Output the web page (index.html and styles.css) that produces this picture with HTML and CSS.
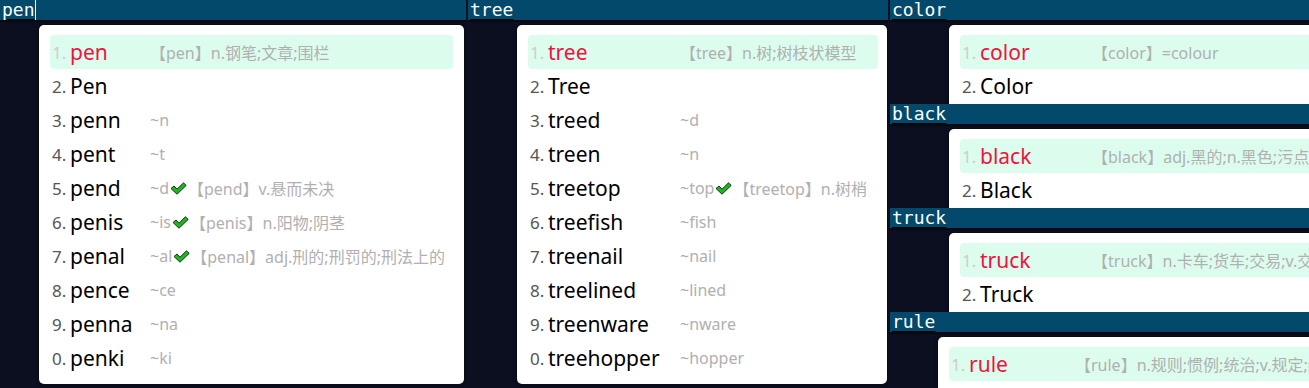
FILE: index.html
```html
<!DOCTYPE html>
<html lang="zh-CN">
<head>
  <meta charset="UTF-8">
  <title>候选词</title>
  <link rel="stylesheet" href="styles.css">
</head>
<body>
  <!-- 第一列 -->
  <div class="column col-pen">
    <div class="bar"><span class="code">pen</span><span class="caret"></span></div>
    <div class="popup pop-pen">
      <div class="row active"><span class="num">1.</span><span class="word">pen</span><span class="note">【pen】n.钢笔;文章;围栏</span></div>
      <div class="row"><span class="num">2.</span><span class="word">Pen</span></div>
      <div class="row"><span class="num">3.</span><span class="word">penn</span><span class="note">~n</span></div>
      <div class="row"><span class="num">4.</span><span class="word">pent</span><span class="note">~t</span></div>
      <div class="row"><span class="num">5.</span><span class="word">pend</span><span class="note">~d<svg class="tick" viewBox="0 0 17 13"><path d="M1 6.5 L4 4 L7 7.2 L13.5 0.8 L16.2 3.4 L7 12.2 Z"/></svg>【pend】v.悬而未决</span></div>
      <div class="row"><span class="num">6.</span><span class="word">penis</span><span class="note">~is<svg class="tick" viewBox="0 0 17 13"><path d="M1 6.5 L4 4 L7 7.2 L13.5 0.8 L16.2 3.4 L7 12.2 Z"/></svg>【penis】n.阳物;阴茎</span></div>
      <div class="row"><span class="num">7.</span><span class="word">penal</span><span class="note">~al<svg class="tick" viewBox="0 0 17 13"><path d="M1 6.5 L4 4 L7 7.2 L13.5 0.8 L16.2 3.4 L7 12.2 Z"/></svg>【penal】adj.刑的;刑罚的;刑法上的</span></div>
      <div class="row"><span class="num">8.</span><span class="word">pence</span><span class="note">~ce</span></div>
      <div class="row"><span class="num">9.</span><span class="word">penna</span><span class="note">~na</span></div>
      <div class="row"><span class="num">0.</span><span class="word">penki</span><span class="note">~ki</span></div>
    </div>
  </div>

  <!-- 第二列 -->
  <div class="column col-tree">
    <div class="bar"><span class="code">tree</span></div>
    <div class="popup pop-tree">
      <div class="row active"><span class="num">1.</span><span class="word">tree</span><span class="note">【tree】n.树;树枝状模型</span></div>
      <div class="row"><span class="num">2.</span><span class="word">Tree</span></div>
      <div class="row"><span class="num">3.</span><span class="word">treed</span><span class="note">~d</span></div>
      <div class="row"><span class="num">4.</span><span class="word">treen</span><span class="note">~n</span></div>
      <div class="row"><span class="num">5.</span><span class="word">treetop</span><span class="note">~top<svg class="tick" viewBox="0 0 17 13"><path d="M1 6.5 L4 4 L7 7.2 L13.5 0.8 L16.2 3.4 L7 12.2 Z"/></svg>【treetop】n.树梢</span></div>
      <div class="row"><span class="num">6.</span><span class="word">treefish</span><span class="note">~fish</span></div>
      <div class="row"><span class="num">7.</span><span class="word">treenail</span><span class="note">~nail</span></div>
      <div class="row"><span class="num">8.</span><span class="word">treelined</span><span class="note">~lined</span></div>
      <div class="row"><span class="num">9.</span><span class="word">treenware</span><span class="note">~nware</span></div>
      <div class="row"><span class="num">0.</span><span class="word">treehopper</span><span class="note">~hopper</span></div>
    </div>
  </div>

  <!-- 第三列：四个截断的小窗 -->
  <div class="column col-small">
    <div class="panel">
      <div class="bar"><span class="code">color</span></div>
      <div class="popup pop-mid">
        <div class="row active"><span class="num">1.</span><span class="word">color</span><span class="note">【color】=colour</span></div>
        <div class="row"><span class="num">2.</span><span class="word">Color</span></div>
      </div>
    </div>
    <div class="panel">
      <div class="bar"><span class="code">black</span></div>
      <div class="popup pop-mid">
        <div class="row active"><span class="num">1.</span><span class="word">black</span><span class="note">【black】adj.黑的;n.黑色;污点;v.使变黑</span></div>
        <div class="row"><span class="num">2.</span><span class="word">Black</span></div>
      </div>
    </div>
    <div class="panel">
      <div class="bar"><span class="code">truck</span></div>
      <div class="popup pop-mid">
        <div class="row active"><span class="num">1.</span><span class="word">truck</span><span class="note">【truck】n.卡车;货车;交易;v.交换</span></div>
        <div class="row"><span class="num">2.</span><span class="word">Truck</span></div>
      </div>
    </div>
    <div class="panel">
      <div class="bar"><span class="code">rule</span></div>
      <div class="popup pop-rule">
        <div class="row active"><span class="num">1.</span><span class="word">rule</span><span class="note">【rule】n.规则;惯例;统治;v.规定;统治</span></div>
        <div class="row"><span class="num">2.</span><span class="word">Rule</span></div>
      </div>
    </div>
  </div>
</body>
</html>
```

FILE: styles.css
```css
body {
  margin: 0;
  height: 388px;
  overflow: hidden;
  display: flex;
  background-color: #0c0f1f;
  font-family: "Noto Sans", "Noto Sans CJK SC", sans-serif;
}

.column {
  flex: none;
  overflow: hidden;
}

.col-pen {
  width: 466px;
}

.col-tree {
  width: 420px;
  margin-left: 2px;
}

.col-small {
  width: 419px;
  margin-left: 2px;
}

/* 输入栏 */
.bar {
  height: 20px;
  border-bottom: 2px solid #060812;
  background-color: #02496b;
  display: flex;
  align-items: stretch;
}

.code {
  padding-left: 2px;
  font-family: "DejaVu Sans Mono", monospace;
  font-size: 18px;
  line-height: 20px;
  color: #ffffff;
  text-decoration: underline;
  text-decoration-color: #000000;
  text-underline-offset: 3px;
  white-space: nowrap;
}

.caret {
  width: 1px;
  background-color: #ffffff;
}

/* 候选窗 */
.popup {
  margin-top: 3px;
  padding: 10px 11px 9px 11px;
  background-color: #ffffff;
  border-radius: 5px;
  box-shadow: 0 0 4px rgba(0, 0, 0, 0.6);
  white-space: nowrap;
}

.pop-pen {
  margin-left: 39px;
  margin-right: 2px;
  --word-w: 80px;
}

.pop-tree {
  margin-left: 49px;
  margin-right: 1px;
  padding-right: 9px;
  --word-w: 132px;
}

.pop-mid {
  margin-left: 59px;
  width: 560px;
  --word-w: 112px;
}

.pop-rule {
  margin-left: 48px;
  width: 560px;
  --word-w: 106px;
}

.panel {
  height: 104px;
  overflow: hidden;
}

.row {
  height: 34px;
  display: flex;
  align-items: center;
  border-radius: 4px;
}

.row.active {
  background-color: #dcfdee;
}

.num {
  width: 18px;
  padding-left: 2px;
  flex: none;
  font-size: 17px;
  color: #555555;
}

.active .num {
  color: #cccccc;
}

.word {
  width: var(--word-w);
  flex: none;
  font-size: 21px;
  color: #000000;
}

.active .word {
  color: #f5103c;
}

.note {
  display: flex;
  align-items: center;
  font-size: 16px;
  color: #b0b0b0;
}

.tick {
  width: 17px;
  height: 13px;
  margin: 0 1px 0 1px;
}

.tick path {
  fill: #22b422;
  stroke: #0d3a0d;
  stroke-width: 1;
  stroke-linejoin: round;
}
```
